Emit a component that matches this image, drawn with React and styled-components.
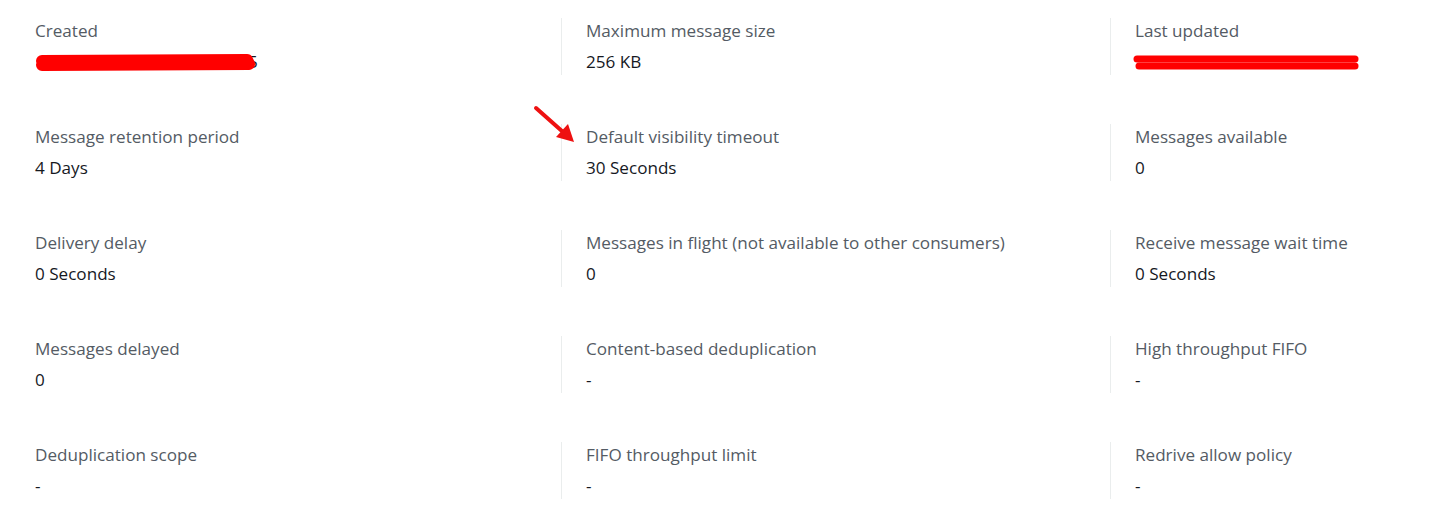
import styled, { createGlobalStyle } from "styled-components";

const GlobalStyle = createGlobalStyle`
  html, body {
    margin: 0;
    background: #ffffff;
  }
  body {
    font-family: "Open Sans", "Noto Sans", sans-serif;
    overflow: hidden;
  }
`;

const Page = styled.div`
  position: relative;
  width: 1432px;
  height: 532px;
  padding: 18px 0 0 11px;
  box-sizing: border-box;
  overflow: hidden;
`;

const Grid = styled.div`
  display: grid;
  grid-template-columns: 550px 549px 550px;
  row-gap: 49px;
`;

const Cell = styled.div`
  position: relative;
  display: flex;
  flex-direction: column;
  gap: 5px;
  height: 57px;
  padding-left: 24px;
  box-sizing: border-box;
  border-left: ${(p) => (p.$first ? "none" : "1px solid #eaeded")};
`;

const Label = styled.div`
  font-size: 17.1px;
  line-height: 26px;
  color: #545b64;
  white-space: nowrap;
`;

const Value = styled.div`
  position: relative;
  font-size: 17.1px;
  line-height: 26px;
  color: #16191f;
  white-space: nowrap;
`;

const Redaction = styled.svg`
  position: absolute;
  left: ${(p) => p.$left}px;
  top: 0;
  overflow: visible;
`;

const Arrow = styled.svg`
  position: absolute;
  left: 530px;
  top: 102px;
  overflow: visible;
`;

const items = [
  ["Created", "redactA"],
  ["Maximum message size", "256 KB"],
  ["Last updated", "redactB"],
  ["Message retention period", "4 Days"],
  ["Default visibility timeout", "30 Seconds"],
  ["Messages available", "0"],
  ["Delivery delay", "0 Seconds"],
  ["Messages in flight (not available to other consumers)", "0"],
  ["Receive message wait time", "0 Seconds"],
  ["Messages delayed", "0"],
  ["Content-based deduplication", "-"],
  ["High throughput FIFO", "-"],
  ["Deduplication scope", "-"],
  ["FIFO throughput limit", "-"],
  ["Redrive allow policy", "-"],
];

function renderValue(v) {
  if (v === "redactA") {
    return (
      <Value>
        <span style={{ paddingLeft: 213 }}>5</span>
        <Redaction $left={0} width="222" height="26">
          <path d="M7 12 L212 11 L214 15 L7 16" fill="#ff0000" stroke="#ff0000" strokeWidth="12" strokeLinejoin="round" strokeLinecap="round" />
        </Redaction>
      </Value>
    );
  }
  if (v === "redactB") {
    return (
      <Value>
        <span>&nbsp;</span>
        <Redaction $left={-2} width="228" height="26">
          <path d="M4 10 L222 10" stroke="#ff0000" strokeWidth="7" strokeLinecap="round" />
          <path d="M6 17 L222 17" stroke="#ff0000" strokeWidth="7" strokeLinecap="round" />
        </Redaction>
      </Value>
    );
  }
  return <Value>{v}</Value>;
}

export default function App() {
  return (
    <>
      <GlobalStyle />
      <Page>
        <Grid>
          {items.map(([label, value], i) => (
            <Cell key={label} $first={i % 3 === 0}>
              <Label>{label}</Label>
              {renderValue(value)}
            </Cell>
          ))}
        </Grid>
        <Arrow width="50" height="46">
          <line x1="6" y1="6" x2="33" y2="30" stroke="#ee1111" strokeWidth="4" strokeLinecap="round" />
          <polygon points="44,40 26,35 38,22" fill="#ee1111" />
        </Arrow>
      </Page>
    </>
  );
}
